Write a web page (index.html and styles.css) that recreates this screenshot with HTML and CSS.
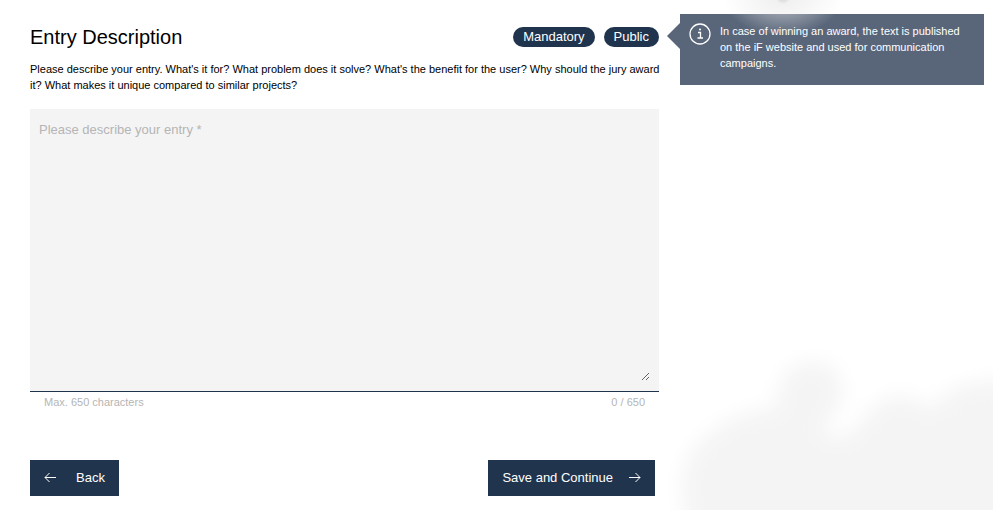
FILE: index.html
```
<!DOCTYPE html>
<html lang="en">
  <head>
    <meta charset="utf-8">
    <title>Entry Description</title>
    <link rel="stylesheet" href="styles.css">
  </head>
  <body>
    <svg class="cloud" width="340" height="170" viewBox="0 0 340 170" aria-hidden="true">
      <defs>
        <filter id="soft" x="-20%" y="-30%" width="140%" height="160%">
          <feGaussianBlur stdDeviation="10"/>
        </filter>
      </defs>
      <path filter="url(#soft)" fill="#f4f4f4" d="M54 230C24 170 22 126 46 104C64 86 84 72 124 68C124 36 140 22 158 22C184 22 192 40 188 60C182 78 168 84 172 94C180 102 200 94 208 84C218 66 230 58 248 56C266 56 270 70 284 66C294 48 312 38 380 42V230Z"/>
    </svg>
    <div class="glow"></div>
    <div class="page">
      <form class="entry">
        <div class="entry-header">
          <h1>Entry Description</h1>
          <div class="tags">
            <span class="tag">Mandatory</span>
            <span class="tag">Public</span>
          </div>
        </div>
        <label class="intro" for="description">Please describe your entry. What's it for? What problem does it solve? What's the benefit for the user? Why should the jury award it? What makes it unique compared to similar projects?</label>
        <div class="field">
          <textarea id="description" maxlength="650" placeholder="Please describe your entry *"></textarea>
        </div>
        <div class="hint">
          <span>Max. 650 characters</span>
          <span id="count">0 / 650</span>
        </div>
        <div class="actions">
          <button class="back" type="button">
            <svg width="12" height="12" viewBox="0 0 12 12" aria-hidden="true"><path d="M12 5.5H1M5.5 1L1 5.5L5.5 10"/></svg>
            Back
          </button>
          <button type="submit">
            Save and Continue
            <svg width="12" height="12" viewBox="0 0 12 12" aria-hidden="true"><path d="M0 5.5H11M6.5 1L11 5.5L6.5 10"/></svg>
          </button>
        </div>
      </form>
      <aside class="note">
        <svg class="note-icon" width="22" height="22" viewBox="0 0 22 22" aria-hidden="true">
          <circle cx="11" cy="11" r="10"/>
          <path d="M9 9.5H11.5V15M8.5 15H14"/>
          <circle class="dot" cx="11" cy="6.5" r="1"/>
        </svg>
        <p>In case of winning an award, the text is published on the iF website and used for communication campaigns.</p>
      </aside>
    </div>
    <script>
      const description = document.getElementById('description');
      const count = document.getElementById('count');

      description.addEventListener('input', () => {
        count.textContent = description.value.length + ' / 650';
      });
    </script>
  </body>
</html>
```

FILE: styles.css
```
body {
  margin: 0;
  position: relative;
  overflow-x: hidden;
  background: #fff;
  color: #000;
  font-family: "Liberation Sans", Arial, sans-serif;
}
.cloud {
  position: absolute;
  top: 340px;
  right: 0;
  z-index: -1;
}
/* light spot that also shines over the note */
.glow {
  position: absolute;
  top: -44px;
  right: 150px;
  width: 120px;
  height: 80px;
  z-index: 1;
  pointer-events: none;
  background:
    radial-gradient(circle at 50% 40px, #dfdfdf 5px, transparent 8px),
    radial-gradient(closest-side, rgba(232, 232, 232, 0.6) 20%, rgba(232, 232, 232, 0));
}
.page {
  display: grid;
  grid-template-columns: 1fr 304px;
  column-gap: 21px;
  align-items: start;
  padding: 14px 9px 14px 30px;
}
.entry-header {
  display: flex;
  align-items: center;
  justify-content: space-between;
  padding-top: 8px;
}
h1 {
  margin: 0;
  font-size: 20px;
  line-height: 30px;
  font-weight: normal;
}
.tags {
  display: flex;
  gap: 9px;
}
.tag {
  padding: 0 10px;
  border-radius: 10px;
  background-color: #21344e;
  color: #fff;
  font-size: 13px;
  line-height: 20px;
}
.intro {
  display: block;
  margin: 9px -8px 16px 0;
  font-size: 11px;
  line-height: 16px;
}
.field {
  display: flex;
  height: 262px;
  padding: 10px 9px 10px;
  border-bottom: 1px solid #21344e;
  background-color: #f4f4f4;
}
textarea {
  width: 100%;
  padding: 0;
  border: none;
  outline: none;
  background: transparent;
  font-family: inherit;
  font-size: 13px;
  line-height: 21px;
}
textarea::placeholder {
  color: #b5b5b5;
}
.hint {
  display: flex;
  justify-content: space-between;
  padding: 2px 14px 0;
  color: #b5b5b5;
  font-size: 11px;
  line-height: 16px;
}
.actions {
  display: flex;
  justify-content: space-between;
  margin-top: 50px;
  padding-right: 4px;
}
button {
  display: flex;
  align-items: center;
  gap: 16px;
  height: 36px;
  padding: 0 14px 1px;
  border: none;
  background-color: #21344e;
  color: #fff;
  font-family: inherit;
  font-size: 13px;
  cursor: pointer;
}
.back {
  gap: 20px;
}
button svg {
  fill: none;
  stroke: #fff;
}
.note {
  position: relative;
  display: flex;
  gap: 9px;
  padding: 9px 20px 14px 9px;
  background-color: rgba(33, 51, 77, 0.75);
  color: #fff;
}
.note::before {
  content: "";
  position: absolute;
  top: 9px;
  left: -13px;
  border: solid transparent;
  border-width: 13px 13px 13px 0;
  border-right-color: rgba(33, 51, 77, 0.75);
}
.note p {
  margin: 0;
  font-size: 11px;
  line-height: 16px;
}
.note-icon {
  flex: none;
  fill: none;
  stroke: #fff;
  stroke-width: 1.3;
}
.note-icon .dot {
  fill: #fff;
  stroke: none;
}
```
